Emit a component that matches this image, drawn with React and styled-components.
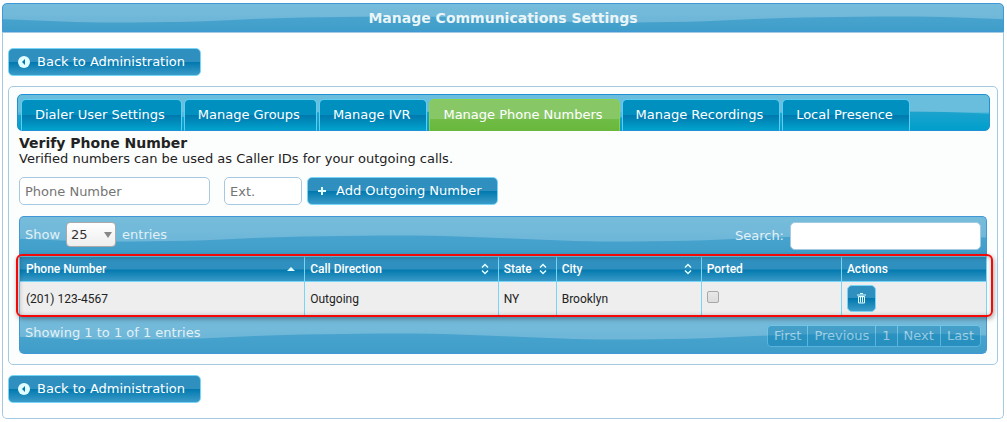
import React, { useState } from "react";
import styled, { createGlobalStyle } from "styled-components";

const wave = (opacity) =>
  `url("data:image/svg+xml,%3Csvg xmlns='http://www.w3.org/2000/svg' width='500' height='100'%3E%3Cpath d='M0 0H500V51C460 53.500 410 54.500 362 54.500C290 54.500 230 48.500 147 48.500C90 48.500 40 49.500 0 51Z' fill='white' fill-opacity='${opacity}'/%3E%3C/svg%3E")`;

const glass = "linear-gradient(#2f90bf 50%, #0078ae 50%, #3c9bc8)";
const tabGlass = "linear-gradient(#0090bf 50%, #0078ae 50%, #00a2cb)";
const bar = "linear-gradient(#50aad2, #3f9dc9)";

const GlobalStyle = createGlobalStyle`
  * {
    box-sizing: border-box;
  }

  body {
    margin: 3px 3px 3px 2px;
    background: #fff;
    color: #222;
    font: 13px/16px Verdana, "DejaVu Sans", sans-serif;
  }

  button, input, select {
    font: inherit;
  }
`;

const Page = styled.main`
  border: 1px solid #a6c9e2;
  border-top: 0;
  border-radius: 5px;
`;

const Title = styled.h1`
  margin: 0 -1px;
  height: 29px;
  border: 1px solid #4297d7;
  border-radius: 5px 5px 0 0;
  background: ${wave(0.22)} 50% 50% repeat-x, ${bar};
  color: #eaf5f7;
  font-size: 14px;
  line-height: 28px;
  text-align: center;
`;

const Content = styled.div`
  display: flex;
  flex-direction: column;
  align-items: flex-start;
  gap: 10px;
  padding: 15px 5px;
  border-top: 1px solid #a6c9e2;
`;

const Button = styled.button`
  display: flex;
  align-items: center;
  gap: 6px;
  height: 28px;
  padding: 0 15px 0 8px;
  border: 1px solid #77d5f7;
  border-radius: 5px;
  background: ${glass};
  color: #fff;
  white-space: nowrap;
  cursor: pointer;
`;

const IconButton = styled(Button)`
  justify-content: center;
  width: 29px;
  height: 27px;
  padding: 0;
`;

const Panel = styled.section`
  align-self: stretch;
  padding: 7px 7px 7px 8px;
  border: 1px solid #a6c9e2;
  border-radius: 5px;
  background: #fcfdfd;
`;

const Tabs = styled.nav`
  display: flex;
  align-items: flex-end;
  gap: 2px;
  height: 37px;
  padding: 0 3px;
  border: 1px solid #2191d6;
  border-radius: 5px;
  background: ${wave(0.25)} 50% 50% repeat-x,
    linear-gradient(#35a8d0 50%, #1ba3cd 50%, #009fcc);
`;

const Tab = styled.a`
  height: 32px;
  padding: 0 16px 0 13px;
  margin-bottom: -1px;
  border: 1px solid ${(props) => (props.$active ? "#8bd24a" : "#5fcdf2")};
  border-bottom-color: ${(props) => (props.$active ? "#6ab83e" : "#2191d6")};
  border-radius: 5px 5px 0 0;
  background: ${(props) =>
    props.$active
      ? "linear-gradient(#88c765 64%, #70bc45 64%, #69b83d)"
      : tabGlass};
  color: #fff;
  line-height: 30px;
  text-decoration: none;
  white-space: nowrap;
`;

const Body = styled.div`
  padding: 4px 3px 3px 2px;
`;

const Heading = styled.h2`
  margin: 0;
  font-size: 14px;
  line-height: 16px;
`;

const Text = styled.p`
  margin: 0;
`;

const Form = styled.form`
  display: flex;
  align-items: center;
  gap: 5px;
  margin: 10px 0 11px;
`;

const Input = styled.input`
  width: ${(props) => props.$width}px;
  height: 28px;
  padding: 0 5px;
  border: 1px solid #a6c9e2;
  border-radius: 5px;
  background: #fff;
  color: #222;

  &::placeholder {
    color: #757575;
  }
`;

const PhoneInput = styled(Input)`
  margin-right: 9px;
`;

const Bar = styled.div`
  display: flex;
  align-items: flex-start;
  justify-content: space-between;
  height: 40px;
  padding: 5px 5px 0;
  border: 1px solid #4297d7;
  border-bottom: 0;
  border-radius: 5px 5px 0 0;
  background: ${wave(0.22)} 50% 50% repeat-x, ${bar};
  color: #e0f1f8;
`;

const Footer = styled(Bar)`
  height: 38px;
  padding-top: 9px;
  border: 1px solid #4297d7;
  border-top: 0;
  border-radius: 0 0 5px 5px;
`;

const Label = styled.label`
  display: flex;
  align-items: center;
  gap: 6px;
`;

const SelectBox = styled.span`
  display: flex;
  position: relative;

  svg {
    position: absolute;
    top: 10px;
    right: 4px;
    pointer-events: none;
  }
`;

const Select = styled.select`
  appearance: none;
  width: 50px;
  height: 25px;
  padding: 0 4px;
  border: 1px solid #aaa;
  border-radius: 4px;
  background: linear-gradient(#fff, #eee);
  color: #333;
`;

const Highlight = styled.div`
  position: relative;

  &::after {
    content: "";
    position: absolute;
    inset: -2px -6px -1px -3px;
    border: 2px solid #f40808;
    border-radius: 6px;
    box-shadow: 1px 2px 5px rgba(0, 0, 0, 0.35),
      inset 1px 1px 5px rgba(0, 0, 0, 0.3);
    pointer-events: none;
  }
`;

const Table = styled.table`
  width: 100%;
  table-layout: fixed;
  border-collapse: collapse;
  font: 12px/16px Roboto, "Noto Sans", sans-serif;
`;

const Th = styled.th`
  width: ${(props) => props.$width};
  height: 25px;
  padding: 0 8px 0 5px;
  border: 1px solid #77d5f7;
  background: ${glass};
  color: #fff;
  font-weight: 500;
  text-align: left;

  &:first-child {
    padding-left: 6px;
  }

  div {
    display: flex;
    align-items: center;
    justify-content: space-between;
  }
`;

const Td = styled.td`
  height: 34px;
  padding: 0 5px;
  border: 1px solid #77d5f7;
  border-bottom: 0;
  background: #eee;

  &:first-child {
    padding-left: 6px;
  }
`;

const Checkbox = styled.input`
  appearance: none;
  display: block;
  width: 12px;
  height: 12px;
  margin: 0 0 4px;
  border: 1px solid #a8a8a8;
  border-radius: 2px;
  background: linear-gradient(#e8e8e8, #dcdcdc);
`;

const Pager = styled.div`
  display: flex;
  opacity: 0.4;
`;

const PageButton = styled.button`
  height: 22px;
  padding: 0 6px;
  margin-left: -1px;
  border: 1px solid #77d5f7;
  background: #0078ae;
  color: #fff;

  &:first-child {
    border-radius: 4px 0 0 4px;
  }

  &:last-child {
    border-radius: 0 4px 4px 0;
  }
`;

const BackIcon = () => (
  <svg width="14" height="14" viewBox="0 0 14 14">
    <circle cx="7" cy="7" r="6" fill="#e0fdff" />
    <path d="M8 4v6L5 7z" fill="#0078ae" />
  </svg>
);

const PlusIcon = () => (
  <svg width="14" height="14" viewBox="0 0 14 14">
    <path d="M6 3v8M2 7h8" stroke="#e0fdff" strokeWidth="2" />
  </svg>
);

const TrashIcon = () => (
  <svg width="9" height="11" viewBox="0 0 9 11">
    <path
      d="M3 .5h3M0 2h9M1.500 3.500v6.500h6v-6.500zM3.500 4v5.500M5.500 4v5.500"
      fill="none"
      stroke="#e0fdff"
    />
  </svg>
);

const SortIcon = ({ sorted }) => (
  <svg width="10" height="12" viewBox="0 0 10 12">
    {sorted ? (
      <path d="M5 4l4 4H1z" fill="#e0fdff" />
    ) : (
      <path
        d="M2 4.500l3-3 3 3M2 7.500l3 3 3-3"
        fill="none"
        stroke="#e0fdff"
        strokeWidth="1.500"
      />
    )}
  </svg>
);

const BackButton = () => (
  <Button type="button">
    <BackIcon />
    Back to Administration
  </Button>
);

const tabs = [
  "Dialer User Settings",
  "Manage Groups",
  "Manage IVR",
  "Manage Phone Numbers",
  "Manage Recordings",
  "Local Presence",
];

const columns = [
  { name: "Phone Number", width: "29.500%", sort: true, sorted: true },
  { name: "Call Direction", width: "20%", sort: true },
  { name: "State", width: "6%", sort: true },
  { name: "City", width: "15%", sort: true },
  { name: "Ported", width: "14.500%" },
  { name: "Actions", width: "15%" },
];

const App = () => {
  const [active, setActive] = useState("Manage Phone Numbers");
  const [length, setLength] = useState("25");

  return (
    <Page>
      <GlobalStyle />
      <Title>Manage Communications Settings</Title>
      <Content>
        <BackButton />
        <Panel>
          <Tabs>
            {tabs.map((tab) => (
              <Tab
                key={tab}
                href="#"
                $active={tab === active}
                onClick={() => setActive(tab)}
              >
                {tab}
              </Tab>
            ))}
          </Tabs>
          <Body>
            <Heading>Verify Phone Number</Heading>
            <Text>
              Verified numbers can be used as Caller IDs for your outgoing
              calls.
            </Text>
            <Form onSubmit={(e) => e.preventDefault()}>
              <PhoneInput
                type="tel"
                aria-label="Phone Number"
                placeholder="Phone Number"
                $width={191}
              />
              <Input
                type="text"
                aria-label="Ext."
                placeholder="Ext."
                $width={78}
              />
              <Button type="submit">
                <PlusIcon />
                Add Outgoing Number
              </Button>
            </Form>
            <Bar>
              <Label>
                Show
                <SelectBox>
                  <Select
                    value={length}
                    onChange={(e) => setLength(e.target.value)}
                  >
                    <option>10</option>
                    <option>25</option>
                    <option>50</option>
                  </Select>
                  <svg width="8" height="6" viewBox="0 0 8 6">
                    <path d="M0 0h8L4 6z" fill="#888" />
                  </svg>
                </SelectBox>
                entries
              </Label>
              <Label>
                Search:
                <Input type="search" $width={191} />
              </Label>
            </Bar>
            <Highlight>
              <Table>
                <thead>
                  <tr>
                    {columns.map(({ name, width, sort, sorted }) => (
                      <Th key={name} $width={width}>
                        <div>
                          {name}
                          {sort && <SortIcon sorted={sorted} />}
                        </div>
                      </Th>
                    ))}
                  </tr>
                </thead>
                <tbody>
                  <tr>
                    <Td>(201) 123-4567</Td>
                    <Td>Outgoing</Td>
                    <Td>NY</Td>
                    <Td>Brooklyn</Td>
                    <Td>
                      <Checkbox type="checkbox" aria-label="Ported" />
                    </Td>
                    <Td>
                      <IconButton type="button" aria-label="Delete">
                        <TrashIcon />
                      </IconButton>
                    </Td>
                  </tr>
                </tbody>
              </Table>
            </Highlight>
            <Footer>
              <span>Showing 1 to 1 of 1 entries</span>
              <Pager>
                <PageButton type="button">First</PageButton>
                <PageButton type="button">Previous</PageButton>
                <PageButton type="button">1</PageButton>
                <PageButton type="button">Next</PageButton>
                <PageButton type="button">Last</PageButton>
              </Pager>
            </Footer>
          </Body>
        </Panel>
        <BackButton />
      </Content>
    </Page>
  );
};

export default App;
